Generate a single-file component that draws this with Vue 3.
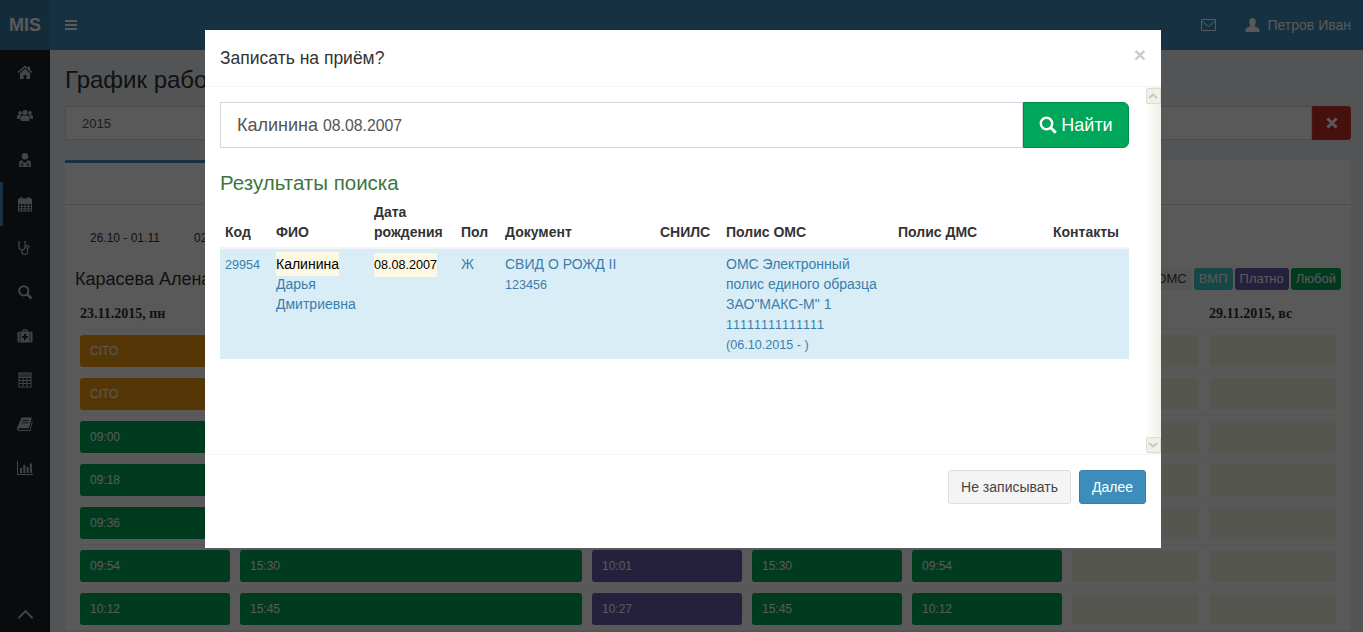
<script setup>
// Расписание: строки сетки под модальным окном
const rows = [
  [{ t: 'CITO', c: 'orange' }, { t: 'CITO', c: 'orange', wide: true }, { t: 'CITO', c: 'orange' }, { t: 'CITO', c: 'orange' }, { t: 'CITO', c: 'orange' }, { c: 'empty' }, { c: 'empty' }],
  [{ t: 'CITO', c: 'orange' }, { t: 'CITO', c: 'orange', wide: true }, { t: 'CITO', c: 'orange' }, { t: 'CITO', c: 'orange' }, { t: 'CITO', c: 'orange' }, { c: 'empty' }, { c: 'empty' }],
  [{ t: '09:00', c: 'green' }, { t: '14:30', c: 'green', wide: true }, { t: '09:10', c: 'purple' }, { t: '14:30', c: 'green' }, { t: '09:00', c: 'green' }, { c: 'empty' }, { c: 'empty' }],
  [{ t: '09:18', c: 'green' }, { t: '14:45', c: 'green', wide: true }, { t: '09:27', c: 'purple' }, { t: '14:45', c: 'green' }, { t: '09:18', c: 'green' }, { c: 'empty' }, { c: 'empty' }],
  [{ t: '09:36', c: 'green' }, { t: '15:00', c: 'green', wide: true }, { t: '09:44', c: 'purple' }, { t: '15:00', c: 'green' }, { t: '09:36', c: 'green' }, { c: 'empty' }, { c: 'empty' }],
  [{ t: '09:54', c: 'green' }, { t: '15:30', c: 'green', wide: true }, { t: '10:01', c: 'purple' }, { t: '15:30', c: 'green' }, { t: '09:54', c: 'green' }, { c: 'empty' }, { c: 'empty' }],
  [{ t: '10:12', c: 'green' }, { t: '15:45', c: 'green', wide: true }, { t: '10:27', c: 'purple' }, { t: '15:45', c: 'green' }, { t: '10:12', c: 'green' }, { c: 'empty' }, { c: 'empty' }]
]

const weeks = ['26.10 - 01.11', '02.11 - 08.11', '09.11 - 15.11', '16.11 - 22.11', '23.11 - 29.11']
const days = ['23.11.2015, пн', '24.11.2015, вт', '25.11.2015, ср', '26.11.2015, чт', '27.11.2015, пт', '28.11.2015, сб', '29.11.2015, вс']
</script>

<template>
  <div class="page">
    <aside class="sidebar">
      <div class="logo">MIS</div>
      <nav class="side-nav">
        <a class="side-item">
          <svg viewBox="0 0 16 16" width="16" height="16"><path d="M8 1.5 0.6 8l.9 1L8 3.4 14.5 9l.9-1L13 5.9V2.4h-2v1.8zM2.9 9.2V15h3.7v-4h2.8v4h3.7V9.2L8 4.8z" fill="currentColor"/></svg>
        </a>
        <a class="side-item">
          <svg viewBox="0 0 16 16" width="16" height="16"><g fill="currentColor"><circle cx="3.1" cy="4.9" r="1.9"/><circle cx="12.9" cy="4.9" r="1.9"/><circle cx="8" cy="4.6" r="2.5"/><path d="M0 11V8.7C0 7.6.8 7 1.8 7h2c-.5.7-.6 1.6-.6 2.6v1.2H1.3zM16 11V8.7c0-1.100-.8-1.700-1.800-1.700h-2c.5.7.6 1.600.6 2.600v1.200h1.900zM4.200 13c-.4 0-.6-.3-.6-.7V9.800c0-1.500.9-2.400 2.200-2.400h4.400c1.300 0 2.200.9 2.200 2.400v2.500c0 .4-.2.7-.6.7z"/></g></svg>
        </a>
        <a class="side-item">
          <svg viewBox="0 0 16 16" width="16" height="16"><g fill="currentColor"><circle cx="8" cy="4.200" r="3.200"/><path d="M2 15v-3.200C2 9.600 3.400 8.300 5 8l1.700 2.600h2.600L11 8c1.600.3 3 1.600 3 3.800V15z"/></g><g fill="none" stroke="#222d32" stroke-width=".9"><circle cx="5" cy="12.800" r="1.200"/><circle cx="11" cy="12.800" r="1.200"/></g></svg>
        </a>
        <a class="side-item active">
          <svg viewBox="0 0 16 16" width="16" height="16"><g fill="none" stroke="currentColor" stroke-width="1"><rect x="1.500" y="3" width="13" height="12"/><path d="M1.500 7.500h13M1.500 10.300h13M1.500 12.800h13M4.700 7.500V15M8 7.500V15M11.300 7.500V15"/></g><path d="M1.500 3h13v4h-13zM3.500 1h2v3h-2zM10.500 1h2v3h-2z" fill="currentColor"/></svg>
        </a>
        <a class="side-item">
          <svg viewBox="0 0 16 16" width="16" height="16"><g fill="none" stroke="currentColor" stroke-width="1.200"><path d="M3 1.500H2v5c0 2 1.200 3.300 3 3.300s3-1.300 3-3.300v-5H7"/><path d="M5 9.800v1.700c0 1.900 1.200 3 2.800 3s2.700-1.100 2.700-3V8.500"/><circle cx="10.500" cy="6.800" r="1.500"/></g></svg>
        </a>
        <a class="side-item">
          <svg viewBox="0 0 16 16" width="16" height="16"><g fill="none" stroke="currentColor"><circle cx="6.800" cy="6.800" r="4.600" stroke-width="2"/><path d="M10.300 10.300 14.500 14.500" stroke-width="2.600"/></g></svg>
        </a>
        <a class="side-item">
          <svg viewBox="0 0 16 16" width="16" height="16"><path d="M5.500 3.500V2.200c0-.6.400-1 1-1h3c.6 0 1 .4 1 1v1.300h-1.200V2.400H6.700v1.100z" fill="currentColor"/><rect x="0.500" y="3.500" width="15" height="11" rx="1.500" fill="currentColor"/><path d="M3 3.500v11M13 3.500v11" stroke="#222d32" stroke-width=".8"/><path d="M7 6h2v2h2v2H9v2H7v-2H5V8h2z" fill="#222d32"/></svg>
        </a>
        <a class="side-item">
          <svg viewBox="0 0 16 16" width="16" height="16"><g fill="none" stroke="currentColor" stroke-width="1"><rect x="2" y="1" width="12" height="14"/><path d="M2 5.500h12M2 8.500h12M2 11.500h12M6 5.500V15M10 5.500V15"/></g><rect x="2" y="1" width="12" height="4.500" fill="currentColor" opacity=".55"/></svg>
        </a>
        <a class="side-item">
          <svg viewBox="0 0 16 16" width="16" height="16"><path d="M4.500 1.500h10.300L12 12.200H2.200c-.9 0-1.100.6-1 1 .1.500.5.800 1.100.8h10.500l2.200-9 .7.300-2.300 9.700H2.200C.9 15 0 14.100 0 13c0-.5.100-1 .3-1.500z" fill="currentColor"/><path d="M5.500 4.500h6.500M5 6.800h6.500" stroke="#222d32" stroke-width=".9"/></svg>
        </a>
        <a class="side-item">
          <svg viewBox="0 0 16 16" width="16" height="16"><path d="M.5 1v13.500H16" fill="none" stroke="currentColor"/><path d="M3 8h2v5H3zM6.300 5h2v8h-2zM9.600 7h2v6h-2zM12.900 3.500h2V13h-2z" fill="currentColor"/></svg>
        </a>
      </nav>
      <a class="side-up">
        <svg viewBox="0 0 18 11" width="17" height="11"><path d="M1.500 9.500 9 2l7.500 7.500" fill="none" stroke="currentColor" stroke-width="2"/></svg>
      </a>
    </aside>

    <div class="main">
      <header class="topbar">
        <svg class="burger" viewBox="0 0 12 10" width="12" height="10"><path d="M0 0h12v2H0zM0 4h12v2H0zM0 8h12v2H0z" fill="currentColor"/></svg>
        <div class="top-right">
          <svg viewBox="0 0 15 12" width="15" height="12"><path d="M.5.500h14v11H.500zM.5 2l7 5.500L14.500 2" fill="none" stroke="currentColor"/></svg>
          <span class="top-user">
            <svg viewBox="0 0 15 14" width="15" height="14"><path d="M7.500 0c2 0 3.300 1.500 3.300 3.600S9.800 7.500 9.300 8.300c1.800.9 5.200 1.400 5.200 3.700v2H.5v-2c0-2.300 3.400-2.800 5.200-3.700-.5-.8-1.500-2.600-1.500-4.700S5.500 0 7.500 0z" fill="currentColor"/></svg>
            Петров Иван
          </span>
        </div>
      </header>

      <section class="content">
        <h1 class="page-title">График работы</h1>
        <div class="filter">
          <div class="filter-field">2015</div>
          <button class="filter-clear">
            <svg viewBox="0 0 12 12" width="12" height="12"><path d="M1.500 1.500l9 9M10.500 1.500l-9 9" stroke="currentColor" stroke-width="3"/></svg>
          </button>
        </div>

        <div class="box">
          <div class="box-head"><span class="tab-active"></span></div>
          <div class="weeks">
            <span v-for="w in weeks" :key="w" class="week">{{ w }}</span>
          </div>
          <div class="doctor-row">
            <span class="doctor">Карасева Алена</span>
            <div class="legend">
              <span class="tag tag-oms">ОМС</span>
              <span class="tag tag-vmp">ВМП</span>
              <span class="tag tag-paid">Платно</span>
              <span class="tag tag-any">Любой</span>
            </div>
          </div>
          <div class="grid">
            <div class="grid-row grid-head">
              <div v-for="d in days" :key="d" class="day" :class="{ 'day-wide': d.startsWith('24') }">{{ d.startsWith('25') ? '' : d }}</div>
            </div>
            <div v-for="(row, i) in rows" :key="i" class="grid-row">
              <div v-for="(s, j) in row" :key="j" class="cell" :class="{ 'cell-wide': s.wide }">
                <div class="slot" :class="s.c">{{ s.t }}</div>
              </div>
            </div>
          </div>
        </div>
      </section>
    </div>

    <div class="backdrop"></div>

    <div class="modal">
      <div class="modal-header">
        <span class="modal-title">Записать на приём?</span>
        <span class="close">×</span>
      </div>
      <div class="modal-body">
        <div class="modal-scroll">
          <div class="search">
            <div class="search-input">Калинина <small>08.08.2007</small></div>
            <button class="search-btn">
              <svg viewBox="0 0 18 18" width="18" height="18"><g fill="none" stroke="currentColor"><circle cx="7.500" cy="7.500" r="5.700" stroke-width="2.400"/><path d="M11.800 11.800 16.800 16.800" stroke-width="3"/></g></svg>
              Найти
            </button>
          </div>
          <h4 class="results-title">Результаты поиска</h4>
          <table class="results">
            <colgroup>
              <col style="width: 51px" />
              <col style="width: 98px" />
              <col style="width: 87px" />
              <col style="width: 44px" />
              <col style="width: 155px" />
              <col style="width: 66px" />
              <col style="width: 172px" />
              <col style="width: 155px" />
              <col style="width: 81px" />
            </colgroup>
            <thead>
              <tr>
                <th>Код</th>
                <th>ФИО</th>
                <th>Дата рождения</th>
                <th>Пол</th>
                <th>Документ</th>
                <th>СНИЛС</th>
                <th>Полис ОМС</th>
                <th>Полис ДМС</th>
                <th>Контакты</th>
              </tr>
            </thead>
            <tbody>
              <tr>
                <td class="small cell-small">29954</td>
                <td><mark class="hl">Калинина</mark><br />Дарья Дмитриевна</td>
                <td class="small cell-small"><mark class="hl hl-small">08.08.2007</mark></td>
                <td>Ж</td>
                <td>СВИД О РОЖД II<div class="small line-small">123456</div></td>
                <td></td>
                <td>ОМС Электронный полис единого образца<br />ЗАО"МАКС-М" 1<div class="small line-small">11111111111111</div><div class="small line-small">(06.10.2015 - )</div></td>
                <td></td>
                <td></td>
              </tr>
            </tbody>
          </table>
        </div>
        <div class="scrollbar">
          <span class="scroll-btn">
            <svg viewBox="0 0 10 6" width="10" height="6"><path d="M1 5 5 1.500 9 5" fill="none" stroke="currentColor" stroke-width="2"/></svg>
          </span>
          <span class="scroll-btn">
            <svg viewBox="0 0 10 6" width="10" height="6"><path d="M1 1 5 4.500 9 1" fill="none" stroke="currentColor" stroke-width="2"/></svg>
          </span>
        </div>
      </div>
      <div class="modal-footer">
        <button class="btn btn-default">Не записывать</button>
        <button class="btn btn-primary">Далее</button>
      </div>
    </div>
  </div>
</template>

<style>
html, body {
  margin: 0;
  height: 100%;
  overflow: hidden;
}
</style>

<style scoped>
.page {
  position: relative;
  display: flex;
  height: 632px;
  overflow: hidden;
  background: #ecf0f5;
  font-family: "Liberation Sans", Arial, sans-serif;
  font-size: 14px;
  line-height: 20px;
  color: #333;
}

/* Sidebar */
.sidebar {
  display: flex;
  flex-direction: column;
  flex: 0 0 50px;
  background: #1a2226;
}

.logo {
  height: 50px;
  background: #367fa9;
  color: #fff;
  font-size: 18px;
  font-weight: 700;
  line-height: 50px;
  text-align: center;
}

.side-nav {
  flex: 1;
}

.side-item {
  display: flex;
  align-items: center;
  justify-content: center;
  height: 44px;
  color: #b8c7ce;
}

.side-item svg {
  width: 16px;
  height: 16px;
}

.side-item.active {
  border-left: 3px solid #3c8dbc;
  padding-right: 3px;
  background: #1a2226;
}

.side-up {
  display: flex;
  justify-content: center;
  padding-bottom: 12px;
  color: #b8c7ce;
}

/* Top bar */
.main {
  display: flex;
  flex-direction: column;
  flex: 1;
  min-width: 0;
}

.topbar {
  display: flex;
  align-items: center;
  justify-content: space-between;
  flex: 0 0 50px;
  padding: 0 12px 0 15px;
  background: #3c8dbc;
  color: #fff;
}

.burger {
  display: block;
}

.top-right {
  display: flex;
  align-items: center;
  gap: 29px;
}

.top-user {
  display: flex;
  align-items: center;
  gap: 7px;
}

/* Content */
.content {
  padding: 15px 12px 0 15px;
  background: #ecf0f5;
}

.page-title {
  margin: 0;
  font-size: 24px;
  font-weight: 400;
  line-height: 30px;
}

.filter {
  display: flex;
  height: 34px;
  margin-top: 11px;
}

.filter-field {
  flex: 1;
  padding: 0 16px;
  border: 1px solid #d2d6de;
  background: #fff;
  color: #555;
  font-size: 13px;
  line-height: 34px;
}

.filter-clear {
  display: flex;
  align-items: center;
  justify-content: center;
  width: 39px;
  padding: 0;
  border: 1px solid #d73925;
  border-radius: 0 3px 3px 0;
  background: #c9302c;
  color: #fff;
}

.box {
  margin-top: 20px;
  border-radius: 3px;
  background: #fff;
}

.box-head {
  height: 44px;
  border-bottom: 1px solid #ddd;
}

.tab-active {
  display: block;
  box-sizing: border-box;
  width: 200px;
  height: 44px;
  border-top: 3px solid #3c8dbc;
}

.weeks {
  display: flex;
  padding: 24px 0 0 25px;
  font-size: 12px;
  line-height: 18px;
}

.week {
  width: 104px;
}

.doctor-row {
  display: flex;
  align-items: center;
  justify-content: space-between;
  margin-top: 17px;
  padding: 0 10px;
  height: 30px;
}

.doctor {
  font-size: 18px;
}

.legend {
  display: flex;
  gap: 2px;
}

.tag {
  padding: 0 5px;
  border-radius: 3px;
  color: #fff;
  font-size: 13px;
  line-height: 22px;
}

.tag-oms { background: #f4f4f4; color: #444; }
.tag-vmp { background: #39cccc; }
.tag-paid { background: #6a5fb0; }
.tag-any { background: #00a65a; }

.grid {
  padding: 0 10px;
}

.grid-row {
  display: grid;
  grid-template-columns: 160px 176px 176px 160px 160px 160px 137px 137px;
  border-top: 1px solid #f4f4f4;
}

.grid-head {
  border-top: 0;
  height: 35px;
}

.day {
  padding: 10px 5px 0;
  font-family: "Liberation Serif", serif;
  font-size: 14px;
  font-weight: 700;
  line-height: 20px;
}

.day-wide {
  grid-column: span 2;
}

.cell {
  padding: 5px;
}

.cell-wide {
  grid-column: span 2;
}

.slot {
  height: 32px;
  padding-left: 10px;
  border-radius: 3px;
  color: #fff;
  font-size: 12px;
  line-height: 32px;
}

.slot.orange { background: #f39c12; }
.slot.green { background: #00a65a; }
.slot.purple { background: #6a5fb0; }
.slot.empty { background: #f3f5e5; }

/* Modal */
.backdrop {
  position: absolute;
  inset: 0;
  background: rgba(0, 0, 0, 0.65);
}

.modal {
  position: absolute;
  top: 30px;
  left: 205px;
  display: flex;
  flex-direction: column;
  width: 956px;
  height: 518px;
  background: #fff;
}

.modal-header {
  display: flex;
  align-items: center;
  justify-content: space-between;
  flex: 0 0 57px;
  box-sizing: border-box;
  padding: 0 15px;
  border-bottom: 1px solid #f4f4f4;
}

.modal-title {
  font-size: 17.5px;
}

.close {
  color: #000;
  opacity: 0.2;
  font-size: 21px;
  font-weight: 700;
  margin-top: -6px;
}

.modal-body {
  display: flex;
  flex: 0 0 367px;
  border-bottom: 1px solid #f4f4f4;
}

.modal-scroll {
  flex: 1;
  padding: 15px 16px 0 15px;
}

.search {
  display: flex;
  height: 46px;
}

.search-input {
  flex: 1;
  box-sizing: border-box;
  padding: 0 16px;
  border: 1px solid #d2d6de;
  color: #555;
  font-size: 18px;
  line-height: 44px;
}

.search-input small {
  font-size: 15.8px;
}

.search-btn {
  display: flex;
  align-items: center;
  justify-content: center;
  gap: 4px;
  width: 106px;
  padding: 0;
  border: 1px solid #008d4c;
  border-radius: 0 6px 6px 0;
  background: #00a65a;
  color: #fff;
  font-family: inherit;
  font-size: 18px;
}

.results-title {
  margin: 25px 0 0;
  color: #3c763d;
  font-size: 20.5px;
  font-weight: 400;
  line-height: 20px;
}

.results {
  width: 909px;
  margin-top: 4px;
  border-collapse: collapse;
  table-layout: fixed;
}

.results th {
  padding: 5px;
  border-bottom: 2px solid #f4f4f4;
  font-weight: 700;
  text-align: left;
  vertical-align: bottom;
}

.results td {
  padding: 5px;
  background: #d9edf7;
  color: #3c7dab;
  vertical-align: top;
}

.results td.cell-small {
  padding-top: 6px;
}

.small {
  font-size: 12.6px;
  font-kerning: none;
}

.line-small {
  line-height: 22px;
  margin-bottom: -2px;
}

.hl {
  padding: 4px 0;
  background: #fcf8e3;
  color: #000;
}

.hl-small {
  padding: 5px 0;
}

.scrollbar {
  display: flex;
  flex-direction: column;
  justify-content: space-between;
  align-items: center;
  flex: 0 0 16px;
  background: linear-gradient(to right, #fff, #f1efe8);
}

.scroll-btn {
  display: flex;
  align-items: center;
  justify-content: center;
  width: 13px;
  height: 14px;
  margin: 1px 0;
  border: 1px solid #dedcd0;
  border-radius: 2px;
  background: #f1f0e8;
  color: #c8c8c0;
}

.modal-footer {
  display: flex;
  justify-content: flex-end;
  gap: 8px;
  padding: 15px;
}

.btn {
  box-sizing: border-box;
  height: 34px;
  padding: 0 12px;
  border: 1px solid;
  border-radius: 3px;
  font-family: inherit;
  font-size: 14px;
}

.btn-default {
  border-color: #ddd;
  background: #f4f4f4;
  color: #444;
}

.btn-primary {
  border-color: #367fa9;
  background: #3c8dbc;
  color: #fff;
}
</style>
